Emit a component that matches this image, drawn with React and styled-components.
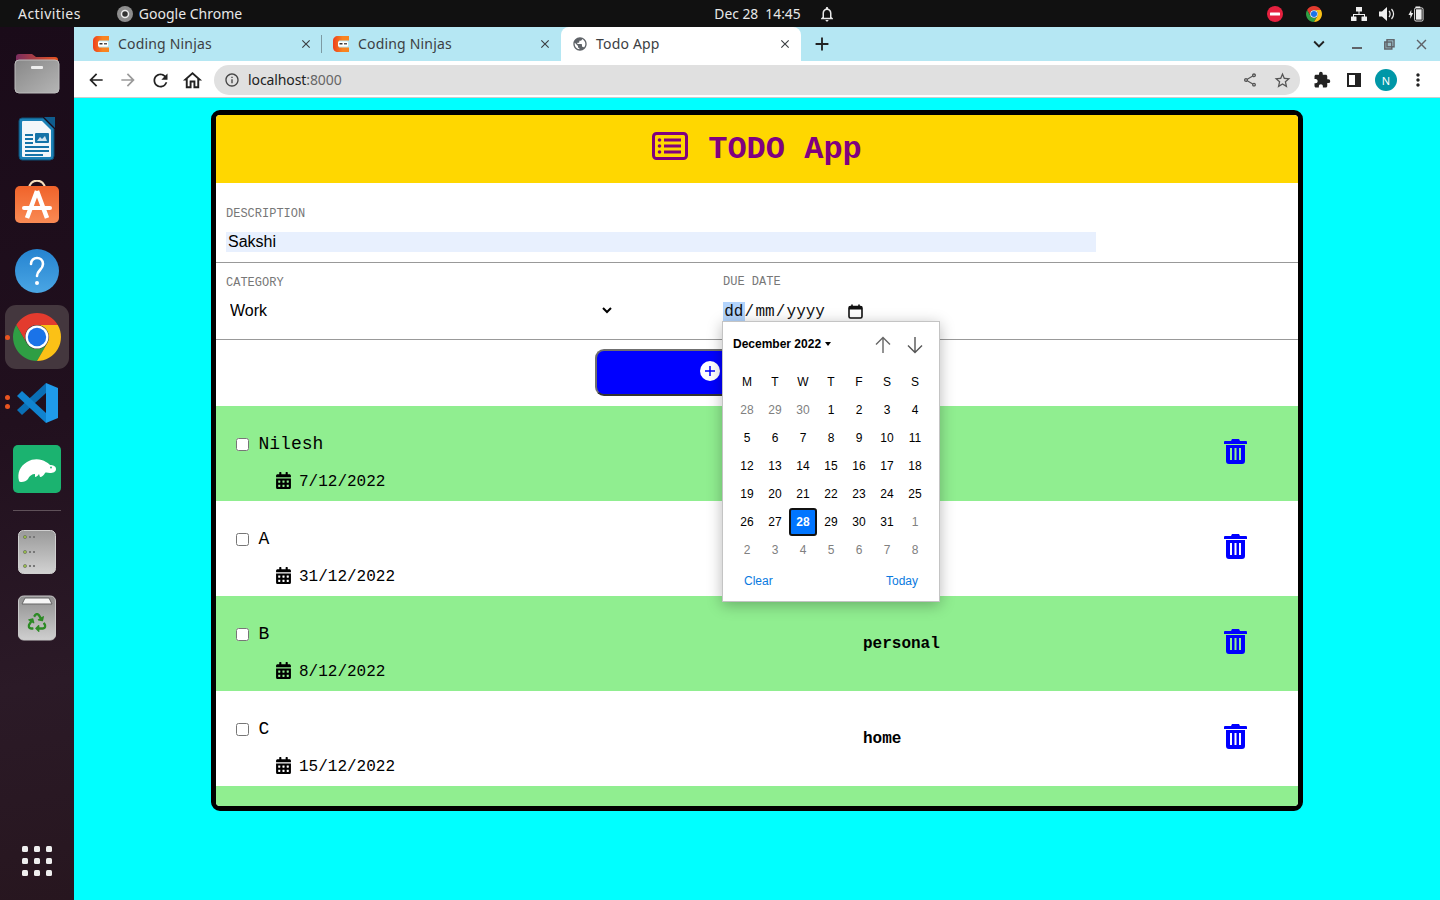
import React from "react";
import styled, { createGlobalStyle } from "styled-components";
import {
  MdArrowBack, MdArrowForward, MdRefresh, MdOutlineHome, MdInfoOutline, MdOutlineShare,
  MdStarBorder, MdExtension, MdMoreVert, MdClose, MdAdd, MdExpandMore, MdPublic, MdNotificationsNone,
} from "react-icons/md";
import { FaCalendarAlt, FaRecycle } from "react-icons/fa";

const Global = createGlobalStyle`
  html, body { margin: 0; padding: 0; height: 100%; overflow: hidden; }
  * { box-sizing: border-box; }
  #root { height: 100vh; }
`;

const Screen = styled.div`
  height: 900px; width: 1440px; display: flex; flex-direction: column; overflow: hidden;
  font-family: "Noto Sans", sans-serif; background: #00ffff;
`;
const TopBar = styled.header`
  height: 27px; flex: none; background: #111; color: #e8e8e8; font-size: 14px;
  display: grid; grid-template-columns: 1fr auto 1fr; align-items: center;
`;
const TopLeft = styled.div`display: flex; align-items: center; padding-left: 18px;`;
const Activities = styled.span`letter-spacing: 0.45px;`;
const AppName = styled.div`display: flex; align-items: center; gap: 6px; margin-left: 36px;`;
const Clock = styled.div`display: flex; align-items: center; gap: 17px; margin-left: 110px; font-size: 13.8px; white-space: pre;`;
const TopRight = styled.div`display: flex; align-items: center; justify-content: flex-end; padding-right: 16px;`;
const TrayItem = styled.span`display: flex; align-items: center; justify-content: center; width: 16px; margin-left: ${(p) => p.$ml}px;`;
const Body = styled.div`flex: 1; display: flex; min-height: 0;`;

const Dock = styled.nav`
  width: 74px; flex: none; padding-top: 13px; padding-bottom: 24px; display: flex; flex-direction: column; align-items: center;
  background: linear-gradient(170deg, #1a0b19 0%, #21101e 45%, #2b1a27 75%, #27161f 100%);
`;
const DockSlot = styled.div`
  position: relative; width: 64px; height: 66px; display: flex; align-items: center; justify-content: center;
`;
const StoreLift = styled.span`display: flex; margin-top: -6px;`;
const ActiveTile = styled.div`
  width: 64px; height: 64px; border-radius: 11px; background: #44373e; display: flex; align-items: center; justify-content: center;
`;
const RunDot = styled.i`
  position: absolute; left: 0px; top: ${(p) => p.$top}px; width: 5px; height: 5px; border-radius: 50%; background: #e95420;
`;
const DockRule = styled.div`width: 48px; height: 1px; background: #5f5159; margin: 8px 0 8px;`;
const AppGrid = styled.div`
  margin-top: auto; display: grid; grid-template-columns: repeat(3, 6px); gap: 6px;
`;
const GridDot = styled.i`width: 6px; height: 6px; border-radius: 1.5px; background: #eee; display: block;`;

const Browser = styled.div`flex: 1; min-width: 0; display: flex; flex-direction: column;`;
const TabStrip = styled.div`
  height: 34px; flex: none; background: #b5e7f3; display: flex; align-items: stretch; padding-left: 8px; color: #3c4043; font-size: 14px;
`;
const Tab = styled.div`
  width: ${(p) => p.$w}px; display: flex; align-items: center; padding-left: 11px; padding-right: 9px; gap: 8px; position: relative;
  background: ${(p) => (p.$active ? "#fff" : "transparent")};
  border-radius: ${(p) => (p.$active ? "8px 8px 0 0" : "0")};
  &::after {
    content: ""; display: ${(p) => (p.$sep ? "block" : "none")};
    position: absolute; right: 0; top: 8px; bottom: 8px; width: 1px; background: #7d9aa3;
  }
`;
const TabTitle = styled.span`flex: 1; white-space: nowrap; letter-spacing: 0.18px; padding-bottom: 2px;`;
const NewTab = styled.div`width: 42px; display: flex; align-items: center; justify-content: center; color: #222;`;
const WindowControls = styled.div`margin-left: auto; display: flex; align-items: center; color: #5f6368; padding-right: 3px;`;
const WinBtn = styled.span`width: ${(p) => p.$w || 32}px; display: flex; justify-content: center; align-items: center; color: ${(p) => p.$c || "#5f6368"};`;
const Toolbar = styled.div`
  height: 37px; flex: none; background: #fff; border-bottom: 1px solid #ccc; display: flex; align-items: flex-start; padding: 4px 0 0 6px;
`;
const ToolBtn = styled.span`
  width: 32px; height: 30px; flex: none; display: flex; align-items: center; justify-content: center; color: ${(p) => p.$c || "#222"};
`;
const Omnibox = styled.div`
  width: 1086px; height: 30px; border-radius: 15px; background: #e0e0e0; margin: 0 6px 0 6px; padding: 0 2px 0 10px; display: flex; align-items: center; font-size: 14px; color: #222;
`;
const Host = styled.span`margin-left: 8px; flex: 1; letter-spacing: -0.1px; padding-bottom: 2px;`;
const Port = styled.span`color: #666;`;
const Avatar = styled.span`
  width: 22px; height: 22px; border-radius: 50%; background: #0097a7; color: #fff; font-size: 11px; display: flex; align-items: center; justify-content: center;
`;

const Viewport = styled.main`flex: 1; min-height: 0; background: #00ffff; padding-top: 12px; display: flex; justify-content: center; align-items: flex-start;`;
const Card = styled.section`
  width: 1092px; height: 701px; border: 5px solid #000; border-radius: 9px; background: #fff; overflow: hidden;
  font-family: "Liberation Mono", monospace;
`;
const Title = styled.h1`
  margin: 0; height: 68px; background: #ffd700; color: #800080; font-size: 32px; font-weight: 700; font-family: "Liberation Mono", monospace;
  display: flex; align-items: center; justify-content: center; gap: 20px;
`;
const TitleIcon = styled.span`display: flex; margin-bottom: 6px;`;
const DescSection = styled.div`
  height: 80px; border-bottom: 1px solid #999; padding: 24px 0 0 10px;
`;
const FieldLabel = styled.label`display: block; font-size: 12px; line-height: 14px; color: #777;`;
const DescInput = styled.input`
  display: block; width: 870px; height: 20px; margin-top: 11px; border: 0; outline: 0; padding: 0 2px; background: #e8f0fe;
  font: 16px "Liberation Sans", sans-serif; color: #000;
`;
const MetaSection = styled.div`
  height: 77px; border-bottom: 1px solid #999; display: flex; padding: 13px 0 0 10px;
`;
const CatField = styled.div`width: 497px; flex: none;`;
const CatSelect = styled.select`
  display: block; width: 389px; height: 26px; margin-top: 7px; border: 0; outline: 0; background: #fff; color: #000;
  font: 16px "Liberation Sans", sans-serif;
`;
const DueField = styled.div`position: relative; margin-top: -1px;`;
const DateInput = styled.div`
  display: flex; align-items: center; height: 22px; margin-top: 12px; font-size: 16px; color: #111; width: 140px;
`;
const DateSeg = styled.span`padding: 0 1.2px; background: ${(p) => (p.$on ? "#b3d4fc" : "transparent")}; line-height: 21px;`;
const DateIcon = styled.span`margin-left: 22px; display: flex; margin-top: -2px;`;

const Popup = styled.div`
  position: absolute; left: -1px; top: 46px; width: 218px; height: 281px; z-index: 5; background: #fff; border: 1px solid #c4c4c4;
  box-shadow: 0 3px 14px rgba(0,0,0,.28); padding: 0 9px 0 10px; font-family: "Liberation Sans", sans-serif; font-size: 12px; color: #000;
`;
const PopHead = styled.div`height: 43px; display: flex; align-items: center; padding-top: 1px;`;
const MonthName = styled.div`font-weight: 700; flex: 1; display: flex; align-items: center; gap: 4px; white-space: nowrap;`;
const Caret = styled.i`width: 0; height: 0; border-left: 3.5px solid transparent; border-right: 3.5px solid transparent; border-top: 4px solid #000;`;
const ArrowBtn = styled.span`width: 32px; display: flex; justify-content: center; margin: 2px -1px 0 1px;`;
const DayGrid = styled.div`display: grid; grid-template-columns: repeat(7, 28px); grid-template-rows: 29px; grid-auto-rows: 28px; margin-top: 2px;`;
const Cell = styled.div`
  display: flex; align-items: center; justify-content: center;
  color: ${(p) => (p.$dim ? "#808080" : "#000")};
  ${(p) => p.$sel && "background:#0075ff;color:#fff;font-weight:700;border:2px solid #111;border-radius:3px;"}
`;
const PopFoot = styled.div`display: flex; justify-content: space-between; padding: 10px 12px 0 11px; color: #0a7ae0;`;

const AddSection = styled.div`height: 66px; padding-top: 9px; display: flex; justify-content: center;`;
const AddButton = styled.button`
  width: 324px; height: 47px; background: #0000ff; border-radius: 9px; border: 2px solid; border-color: #6f6f6f #333 #333 #6f6f6f;
  display: flex; align-items: center; padding: 0 0 4px 103px;
`;
const Row = styled.article`
  height: 95px; display: grid; grid-template-columns: 647px 361px 1fr; background: ${(p) => (p.$odd ? "#90ee90" : "#fff")};
`;
const RowMain = styled.div`padding: 28px 0 0 20px;`;
const NameLine = styled.label`display: flex; align-items: center; gap: 9.500px; font-size: 18px; height: 20px; color: #000;`;
const Check = styled.input`width: 13px; height: 13px; margin: 0;`;
const DateLine = styled.div`display: flex; align-items: center; gap: 7px; margin: 18px 0 0 39px; font-size: 16px; height: 20px; color: #000;`;
const DateGlyph = styled.span`display: flex; margin-top: -3px;`;
const RowCat = styled.div`padding-top: 39px; font-size: 16px; font-weight: 700; line-height: 18px; color: #000;`;
const RowAction = styled.div`padding-top: 33px; line-height: 0;`;
const Tail = styled.div`height: 20px; background: #90ee90;`;

const Chrome = ({ size }) => (
  <svg width={size} height={size} viewBox="0 0 48 48">
    <path fill="#e33b2e" d="M44.78 12A24 24 0 0 0 3.22 12L13.6 30A12 12 0 0 1 24 12Z" />
    <path fill="#2f9e44" d="M3.22 12A24 24 0 0 0 24 48L34.4 30A12 12 0 0 1 13.6 30Z" />
    <path fill="#fbc116" d="M24 48A24 24 0 0 0 44.78 12H24A12 12 0 0 1 34.4 30Z" />
    <circle cx="24" cy="24" r="11.5" fill="#fff" />
    <circle cx="24" cy="24" r="9.2" fill="#1a73e8" />
  </svg>
);
const Ninja = ({ id }) => (
  <svg width="17" height="16" viewBox="0 0 17 16" style={{ flex: "none" }}>
    <defs><linearGradient id={id} x1="0" x2="1"><stop offset="0" stopColor="#ee3f1c" /><stop offset=".6" stopColor="#f9841f" /></linearGradient></defs>
    <path fill={`url(#${id})`} d="M5 0h11v4.500H7C6 4.500 5.500 5 5.500 6v4c0 1 .5 1.500 1.500 1.500h9V16H5C2 16 0 14 0 11V5C0 2 2 0 5 0Z" />
    <rect x="5" y="5.500" width="10" height="5" rx="1" fill="#fff" />
    <rect x="6.500" y="7" width="3" height="1.500" fill="#333" />
    <rect x="11" y="7" width="3" height="1.500" fill="#555" />
  </svg>
);
const Folder = () => (
  <svg width="46" height="42" viewBox="0 0 46 42">
    <defs>
      <linearGradient id="fg" x1="0" x2="1"><stop offset="0" stopColor="#7b2d5f" /><stop offset="1" stopColor="#e95420" /></linearGradient>
      <linearGradient id="fb" x1="0" y1="0" x2="1" y2="1"><stop offset="0" stopColor="#888" /><stop offset="1" stopColor="#b5b5b5" /></linearGradient>
    </defs>
    <path fill="url(#fg)" d="M2 14V5q0-3 3-3h13l4 3h19q3 0 3 3v10Z" />
    <rect x="1" y="8" width="44" height="33" rx="4" fill="url(#fb)" stroke="#bdbdbd" />
    <rect x="17" y="14" width="12" height="3" rx="1" fill="#eee" />
  </svg>
);
const Writer = () => (
  <svg width="38" height="46" viewBox="0 0 38 46">
    <path fill="#0f5c8d" d="M26 1h11v11Z" />
    <path fill="#1b80b5" stroke="#0f4e75" d="M4 2h21l11 11v27q0 4-4 4H4q-3 0-3-4V5q0-3 3-3Z" />
    <path fill="#f3f7fa" d="M5 5h19l9 9v26q0 1-1 1H5q-1 0-1-1V6q0-1 1-1Z" />
    <g fill="#1573a8">
      <rect x="7" y="18" width="8" height="2" /><rect x="7" y="22" width="8" height="2" /><rect x="7" y="26" width="8" height="2" />
      <rect x="7" y="30" width="24" height="2" /><rect x="7" y="34" width="24" height="2" /><rect x="7" y="38" width="18" height="2" />
      <rect x="17" y="17" width="14" height="10" rx="1" />
    </g>
    <path fill="#cfe3ef" d="M19 25l3-4 2 2 3-3 2 5Z" />
  </svg>
);
const Store = () => (
  <svg width="46" height="44" viewBox="0 0 46 44">
    <defs><linearGradient id="sg" x1="0" x2="0" y1="0" y2="1"><stop offset="0" stopColor="#f0632a" /><stop offset="1" stopColor="#f98a54" /></linearGradient></defs>
    <path fill="none" stroke="#f6dfbd" strokeWidth="2.200" d="M15 9c0-11 16-11 16 0" />
    <rect x="1" y="6" width="44" height="37" rx="5" fill="url(#sg)" />
    <path fill="none" stroke="#fff" strokeWidth="4.500" d="M23 11 13 38M23 11l10 27" />
    <rect x="8" y="26" width="30" height="4" rx="2" fill="#fff" />
  </svg>
);
const Help = () => (
  <svg width="44" height="44" viewBox="0 0 44 44">
    <defs><linearGradient id="hg" x1="0" x2="0" y1="0" y2="1"><stop offset="0" stopColor="#2583d0" /><stop offset="1" stopColor="#4aa6e4" /></linearGradient></defs>
    <circle cx="22" cy="22" r="22" fill="url(#hg)" />
    <path fill="none" stroke="#fff" strokeWidth="2.600" strokeLinecap="round" d="M16 15c0-8 12-8 12 0 0 6-6 6-6 12" />
    <circle cx="22" cy="34" r="2" fill="#fff" />
  </svg>
);
const VSCode = () => (
  <svg width="44" height="42" viewBox="0 0 44 42">
    <path fill="#0a6fb5" d="M2 28 31 1V11L7 33Z" />
    <path fill="#1083cf" d="M2 14 7 9 31 31V41Z" />
    <path fill="#1f9bea" d="M31 1 43 6V36L31 41Z" />
  </svg>
);
const Compass = () => (
  <svg width="48" height="48" viewBox="0 0 48 48">
    <rect width="48" height="48" rx="5" fill="#1bb370" />
    <path fill="#fff" d="M6 36c-2-8 1-15 8-19 7-4 14-3 19 0 2 1 3 2 4 3 3 0 6 1 6 4 0 3-3 4-6 4-2 0-4-1-5 0-1 2-3 4-5 4l-1-3c-1 2-3 3-4 3v-3c-3 0-6 2-7 5-2 3-8 4-9 2Z" />
    <circle cx="38" cy="22.500" r=".9" fill="#1bb370" />
  </svg>
);
const Drive = () => (
  <svg width="38" height="48" viewBox="0 0 38 48">
    <defs><linearGradient id="dg" x1="0" x2="0" y1="0" y2="1"><stop offset="0" stopColor="#999" /><stop offset="1" stopColor="#d2d2d2" /></linearGradient></defs>
    <rect x=".5" y=".5" width="37" height="43" rx="5" fill="url(#dg)" stroke="#cfcfcf" transform="translate(0 2)" />
    {[9, 24, 38].map((y) => (
      <g key={y}><circle cx="7" cy={y} r="1.600" fill="#9ac04a" stroke="#555" strokeWidth=".5" /><rect x="11" y={y - 1} width="2" height="2" fill="#777" /><rect x="15" y={y - 1} width="2" height="2" fill="#777" /></g>
    ))}
  </svg>
);
const Bin = () => (
  <svg width="38" height="46" viewBox="0 0 38 46">
    <defs><linearGradient id="bg" x1="0" x2="0" y1="0" y2="1"><stop offset="0" stopColor="#8f8f8f" /><stop offset="1" stopColor="#cfcfcf" /></linearGradient></defs>
    <rect x=".5" y="1" width="37" height="44" rx="5" fill="url(#bg)" stroke="#c8c8c8" />
    <path fill="#f5f5f5" stroke="#666" d="M4 9l3-6h24l3 6Z" />
    <FaRecycle x="9.500" y="18" size="19" color="#2c8a25" />
  </svg>
);
const ListIcon = () => (
  <svg width="36" height="28" viewBox="0 0 36 28" fill="none" stroke="#800080">
    <rect x="1.500" y="1.500" width="33" height="25" rx="3" strokeWidth="3" />
    <path strokeWidth="3" d="M12 8h17M12 14h17M12 20h17" />
    <g fill="#800080" stroke="none"><circle cx="7.500" cy="8" r="1.800" /><circle cx="7.500" cy="14" r="1.800" /><circle cx="7.500" cy="20" r="1.800" /></g>
  </svg>
);
const PlusDisc = () => (
  <svg width="20" height="20" viewBox="0 0 20 20">
    <circle cx="10" cy="10" r="10" fill="#fff" />
    <path stroke="#0000ff" strokeWidth="1.500" d="M10 5v10M5 10h10" />
  </svg>
);
const CalGlyph = () => (
  <svg width="15" height="15" viewBox="0 0 15 15" fill="none" stroke="#111">
    <rect x="1" y="2.500" width="13" height="11.500" rx="1.500" strokeWidth="1.600" />
    <rect x="1" y="2.500" width="13" height="3" fill="#111" strokeWidth="0" />
    <path strokeWidth="1.600" d="M4 .5v3M11 .5v3" />
  </svg>
);
const Trash = () => (
  <svg width="23" height="25" viewBox="0 0 23 25" fill="#0000ff">
    <path d="M8 0h7l1 2h6q1 0 1 1v2H0V3q0-1 1-1h6Z" />
    <path fillRule="evenodd" d="M2 6h19v16q0 3-3 3H5q-3 0-3-3ZM6 9v12h2V9Zm4.500 0v12h2V9ZM15 9v12h2V9Z" />
  </svg>
);
const Arrow = ({ down, c }) => (
  <svg width="18" height="18" viewBox="0 0 18 18" fill="none" stroke={c} strokeWidth="1.400" style={{ transform: down ? "rotate(180deg)" : "none" }}>
    <path d="M9 17V1.500M2 8.500 9 1.500l7 7" />
  </svg>
);
const DoNotDisturb = () => (
  <svg width="16" height="16" viewBox="0 0 16 16"><circle cx="8" cy="8" r="8" fill="#e5213f" /><rect x="3" y="6.500" width="10" height="3" rx=".5" fill="#fff" /></svg>
);
const Network = () => (
  <svg width="16" height="14" viewBox="0 0 16 14" fill="#eee"><rect x="5" y="0" width="6" height="4.500" /><rect x="0" y="9.500" width="5.500" height="4.500" rx=".5" /><rect x="10.500" y="9.500" width="5.500" height="4.500" rx=".5" /><path d="M7.500 4h1v3H14v3h-1V8H3v2H2V7h5.500Z" /></svg>
);
const Volume = () => (
  <svg width="16" height="14" viewBox="0 0 16 14" fill="none"><path fill="#eee" d="M0 4.500h3L8 0v14L3 9.500H0Z" /><path stroke="#eee" strokeWidth="1.200" d="M10 4c1.500 1.500 1.500 4.500 0 6M12.500 2c2.500 3 2.500 7 0 10" /></svg>
);
const Battery = () => (
  <svg width="17" height="16" viewBox="0 0 17 16"><path fill="#eee" d="M3.500 3.500.5 9h2v4l3-6h-2Z" /><rect x="8" y="0" width="5" height="2" fill="#eee" /><rect x="7" y="1.500" width="9" height="14" rx="1.500" fill="#111" stroke="#eee" /><rect x="8.500" y="3" width="6" height="11" fill="#eee" /></svg>
);
const Panel = () => (
  <svg width="14" height="14" viewBox="0 0 14 14"><rect x="1" y="1" width="12" height="12" fill="none" stroke="#222" strokeWidth="2" /><rect x="8" y="1" width="5" height="12" fill="#222" /></svg>
);

const weeks = [
  [[28, 1], [29, 1], [30, 1], [1], [2], [3], [4]],
  [[5], [6], [7], [8], [9], [10], [11]],
  [[12], [13], [14], [15], [16], [17], [18]],
  [[19], [20], [21], [22], [23], [24], [25]],
  [[26], [27], [28, 0, 1], [29], [30], [31], [1, 1]],
  [[2, 1], [3, 1], [4, 1], [5, 1], [6, 1], [7, 1], [8, 1]],
];
const todos = [
  { name: "Nilesh", date: "7/12/2022" },
  { name: "A", date: "31/12/2022" },
  { name: "B", date: "8/12/2022", cat: "personal" },
  { name: "C", date: "15/12/2022", cat: "home" },
];

export default function App() {
  return (
    <Screen>
      <Global />
      <TopBar>
        <TopLeft>
          <Activities>Activities</Activities>
          <AppName>
            <svg width="16" height="16" viewBox="0 0 16 16"><circle cx="8" cy="8" r="8" fill="#8d8d8d" /><circle cx="8" cy="8" r="3.500" fill="#333" stroke="#eee" strokeWidth="1.500" /></svg>
            Google Chrome
          </AppName>
        </TopLeft>
        <Clock><span>Dec 28  14:45</span><MdNotificationsNone size={18} /></Clock>
        <TopRight>
          <TrayItem $ml={0}><DoNotDisturb /></TrayItem>
          <TrayItem $ml={23}><Chrome size={16} /></TrayItem>
          <TrayItem $ml={29}><Network /></TrayItem>
          <TrayItem $ml={12}><Volume /></TrayItem>
          <TrayItem $ml={13}><Battery /></TrayItem>
        </TopRight>
      </TopBar>
      <Body>
        <Dock>
          <DockSlot><Folder /></DockSlot>
          <DockSlot><Writer /></DockSlot>
          <DockSlot><StoreLift><Store /></StoreLift></DockSlot>
          <DockSlot><Help /></DockSlot>
          <DockSlot><ActiveTile><Chrome size={48} /></ActiveTile><RunDot $top={31} /></DockSlot>
          <DockSlot><VSCode /><RunDot $top={25} /><RunDot $top={34} /></DockSlot>
          <DockSlot><Compass /></DockSlot>
          <DockRule />
          <DockSlot><Drive /></DockSlot>
          <DockSlot><Bin /></DockSlot>
          <AppGrid>{Array.from({ length: 9 }, (_, i) => <GridDot key={i} />)}</AppGrid>
        </Dock>
        <Browser>
          <TabStrip>
            <Tab $w={240} $sep><Ninja id="n1" /><TabTitle>Coding Ninjas</TabTitle><MdClose size={14} /></Tab>
            <Tab $w={239}><Ninja id="n2" /><TabTitle>Coding Ninjas</TabTitle><MdClose size={14} /></Tab>
            <Tab $w={240} $active><MdPublic size={16} color="#5f6368" /><TabTitle>Todo App</TabTitle><MdClose size={14} /></Tab>
            <NewTab><MdAdd size={22} /></NewTab>
            <WindowControls>
              <WinBtn $w={44} $c="#222"><MdExpandMore size={22} /></WinBtn>
              <WinBtn><svg width="10" height="10" viewBox="0 0 10 10"><rect y="8" width="10" height="2" fill="#5f6368" /></svg></WinBtn>
              <WinBtn><svg width="11" height="11" viewBox="0 0 11 11" fill="none" stroke="#5f6368" strokeWidth="1.500"><rect x="3" y=".8" width="7" height="7" /><rect x=".8" y="3" width="7" height="7" fill="#5f6368" fillOpacity=".3" /></svg></WinBtn>
              <WinBtn><MdClose size={17} /></WinBtn>
            </WindowControls>
          </TabStrip>
          <Toolbar>
            <ToolBtn><MdArrowBack size={20} /></ToolBtn>
            <ToolBtn $c="#9a9a9a"><MdArrowForward size={20} /></ToolBtn>
            <ToolBtn><MdRefresh size={21} /></ToolBtn>
            <ToolBtn><MdOutlineHome size={23} /></ToolBtn>
            <Omnibox>
              <MdInfoOutline size={16} color="#444" />
              <Host>localhost<Port>:8000</Port></Host>
              <ToolBtn $c="#555"><MdOutlineShare size={16} /></ToolBtn>
              <ToolBtn $c="#555"><MdStarBorder size={19} /></ToolBtn>
            </Omnibox>
            <ToolBtn><MdExtension size={18} /></ToolBtn>
            <ToolBtn><Panel /></ToolBtn>
            <ToolBtn><Avatar>N</Avatar></ToolBtn>
            <ToolBtn><MdMoreVert size={20} /></ToolBtn>
          </Toolbar>
          <Viewport>
            <Card>
              <Title><TitleIcon><ListIcon /></TitleIcon><span>TODO App</span></Title>
              <DescSection>
                <FieldLabel>DESCRIPTION</FieldLabel>
                <DescInput defaultValue="Sakshi" />
              </DescSection>
              <MetaSection>
                <CatField>
                  <FieldLabel>CATEGORY</FieldLabel>
                  <CatSelect defaultValue="Work"><option>Work</option><option>Home</option><option>Personal</option></CatSelect>
                </CatField>
                <DueField>
                  <FieldLabel>DUE DATE</FieldLabel>
                  <DateInput>
                    <DateSeg $on>dd</DateSeg><span>/</span><DateSeg>mm</DateSeg><span>/</span><DateSeg>yyyy</DateSeg>
                    <DateIcon><CalGlyph /></DateIcon>
                  </DateInput>
                  <Popup>
                    <PopHead>
                      <MonthName>December 2022<Caret /></MonthName>
                      <ArrowBtn><Arrow c="#666" /></ArrowBtn>
                      <ArrowBtn><Arrow down c="#555" /></ArrowBtn>
                    </PopHead>
                    <DayGrid>
                      {["M", "T", "W", "T", "F", "S", "S"].map((d, i) => <Cell key={i}>{d}</Cell>)}
                      {weeks.flat().map(([n, dim, sel], i) => <Cell key={i} $dim={dim} $sel={sel}>{n}</Cell>)}
                    </DayGrid>
                    <PopFoot><span>Clear</span><span>Today</span></PopFoot>
                  </Popup>
                </DueField>
              </MetaSection>
              <AddSection><AddButton aria-label="Add"><PlusDisc /></AddButton></AddSection>
              {todos.map((t, i) => (
                <Row key={t.name} $odd={i % 2 === 0}>
                  <RowMain>
                    <NameLine><Check type="checkbox" /><span>{t.name}</span></NameLine>
                    <DateLine><DateGlyph><FaCalendarAlt size={17} /></DateGlyph><span>{t.date}</span></DateLine>
                  </RowMain>
                  <RowCat>{t.cat}</RowCat>
                  <RowAction><Trash /></RowAction>
                </Row>
              ))}
              <Tail />
            </Card>
          </Viewport>
        </Browser>
      </Body>
    </Screen>
  );
}
